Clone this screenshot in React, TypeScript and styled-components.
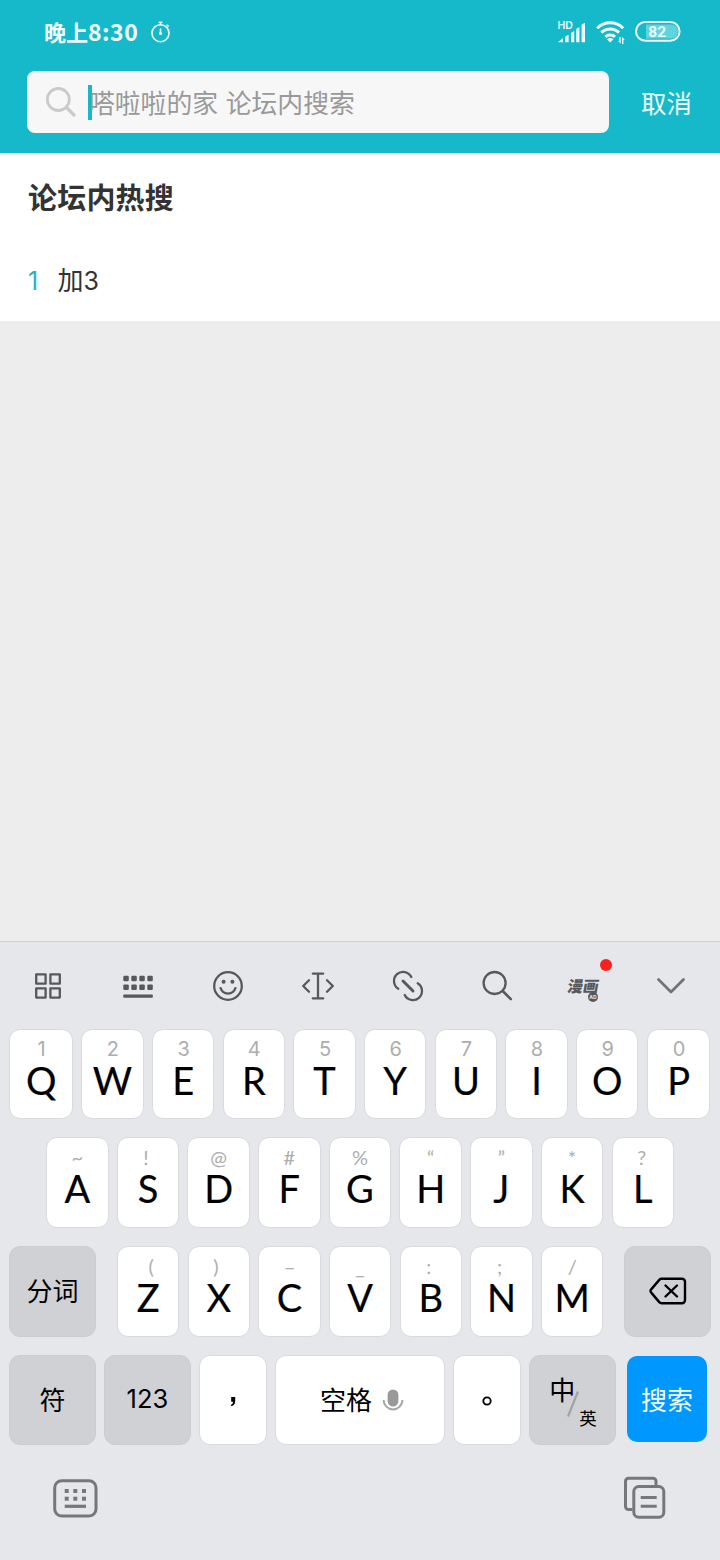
import React from "react";
import styled, { createGlobalStyle } from "styled-components";

const CJK = `"Noto Sans CJK SC", sans-serif`;

const GlobalStyle = createGlobalStyle`
  * { box-sizing: border-box; }
  body { margin: 0; background: #ededed; font-family: ${CJK}; }
  svg { display: block; flex: none; }
`;

const Screen = styled.div`
  width: 720px;
  height: 1560px;
  display: flex;
  flex-direction: column;
  background: #ededed;
  overflow: hidden;
`;

const Header = styled.header`
  height: 153.3px;
  background: #15b9c9;
  flex: none;
`;

const StatusBar = styled.div`
  height: 70.5px;
  padding: 0 39px 7px 44px;
  display: flex;
  align-items: center;
  color: #effdff;
`;

const Clock = styled.div`
  display: flex;
  align-items: baseline;
  font-size: 22px;
  font-weight: 700;
  line-height: 30px;
  margin: -2px 12px 0 0;
`;

const ClockDigits = styled.span`
  font-size: 23px;
  letter-spacing: 0.5px;
`;

const StatusIcons = styled.div`
  margin-left: auto;
  display: flex;
  align-items: center;
`;

const WifiIcon = styled.svg`
  margin: 0 9px 0 9px;
`;

const SearchRow = styled.div`
  display: flex;
  align-items: center;
  padding-left: 27px;
`;

const SearchField = styled.div`
  width: 582px;
  height: 62.8px;
  border-radius: 8px;
  background: #f7f7f7;
  display: flex;
  align-items: center;
  padding-left: 18px;
`;

const Caret = styled.div`
  width: 4px;
  height: 35px;
  margin: 1px -3px 0 11px;
  background: #15b9c9;
`;

const Placeholder = styled.div`
  font-size: 25.8px;
  line-height: 36px;
  padding-top: 1px;
  color: #999;
  word-spacing: 2px;
  white-space: nowrap;
`;

const Cancel = styled.div`
  margin-left: 32px;
  font-size: 25.5px;
  line-height: 36px;
  color: #effdff;
`;

const HotPanel = styled.section`
  height: 167.7px;
  background: #fff;
  padding: 21.7px 28px 0;
  flex: none;
`;

const HotTitle = styled.div`
  font-size: 29px;
  font-weight: 700;
  line-height: 42px;
  letter-spacing: 0.2px;
  color: #333;
`;

const HotItem = styled.div`
  display: flex;
  align-items: baseline;
  margin-top: 43px;
  line-height: 38px;
  font-size: 26px;
  color: #333;
`;

const Rank = styled.span`
  width: 29.5px;
  font-family: Inter, sans-serif;
  font-size: 25px;
  color: #27b4c2;
`;

const ItemNumber = styled.span`
  font-family: Inter, sans-serif;
  font-size: 25px;
`;

const Spacer = styled.div`
  flex: 1;
`;

const Keyboard = styled.section`
  height: 619.5px;
  flex: none;
  background: #e6e7eb;
  border-top: 1px solid #d0d1d3;
`;

const Toolbar = styled.div`
  height: 87.4px;
  display: flex;
  padding-left: 3px;
`;

const Tool = styled.div<{ $w?: number }>`
  width: ${(p) => p.$w ?? 90}px;
  height: 88.5px;
  display: flex;
  justify-content: center;
  align-items: center;
  position: relative;
`;

const Comic = styled.div`
  font-size: 15.5px;
  font-weight: 900;
  line-height: 20px;
  color: #56585b;
  transform: skewX(-10deg);
  margin: 0 2px 2px 0;
`;

const AdBadge = styled.span`
  position: absolute;
  left: 45px;
  top: 50px;
  width: 10px;
  height: 10px;
  border-radius: 50%;
  background: #56585b;
  color: #e6e7eb;
  font: 700 5px/10px Inter, sans-serif;
  text-align: center;
`;

const RedDot = styled.span`
  position: absolute;
  left: 57px;
  top: 17px;
  width: 12px;
  height: 12px;
  border-radius: 50%;
  background: #fb2020;
`;

const Row = styled.div<{ $left?: number }>`
  display: flex;
  height: 90.5px;
  margin-bottom: 18.1px;
  padding-left: ${(p) => p.$left ?? 9.2}px;
  gap: 8.2px;
`;

const KeyCap = styled.div<{ $w?: number; $tone?: "gray" | "white" }>`
  width: ${(p) => p.$w ?? 62.5}px;
  height: 90.5px;
  flex: none;
  border-radius: 11px;
  border: 1px solid ${(p) => (p.$tone === "gray" ? "#cbccd0" : "#d9dade")};
  background: ${(p) => (p.$tone === "gray" ? "#d0d1d5" : "#fff")};
  display: flex;
  align-items: center;
  justify-content: center;
  color: #000;
  font-size: 26px;
  line-height: 36px;
  padding-bottom: 2px;

  svg { margin-top: 2px; }
`;

const FunctionCap = styled(KeyCap).attrs({ $tone: "gray" as const })<{ $side?: "left" | "right" }>`
  width: 86.7px;
  margin-right: ${(p) => (p.$side === "left" ? 12.8 : 0)}px;
  margin-left: ${(p) => (p.$side === "right" ? 12.8 : 0)}px;
`;

const PunctuationCap = styled(KeyCap)<{ $drop: number }>`
  width: 67.6px;
  padding-top: ${(p) => p.$drop}px;
`;

const LetterCap = styled(KeyCap)`
  flex-direction: column;
  justify-content: flex-start;
  padding-top: 7.8px;
`;

const Hint = styled.div<{ $dx: number; $symbol: boolean }>`
  height: 22px;
  font: 400 20px/22px ${(p) => (p.$symbol ? "Lato" : "Inter")}, sans-serif;
  color: #adadad;
  margin-left: ${(p) => p.$dx * 2}px;
`;

const Letter = styled.div`
  margin-top: 1px;
  font: 400 38px/38px Lato, sans-serif;
  -webkit-text-stroke: 0.2px #000;
`;

const Numeric = styled.span`
  font-family: Inter, sans-serif;
  font-size: 25.5px;
`;

const SpaceLabel = styled.span`
  margin: 0 10px 0 4px;
`;

const SearchKey = styled.div`
  width: 80.5px;
  height: 86.5px;
  margin: 1px 0 0 2.6px;
  padding-bottom: 0.5px;
  border-radius: 10px;
  background: #0097ff;
  color: #effaff;
  font-size: 26px;
  display: flex;
  align-items: center;
  justify-content: center;
`;

const Chinese = styled.span`
  font-size: 26px;
  line-height: 36px;
  margin: -19px -9px 0 1px;
`;

const Slash = styled.span`
  padding-top: 9px;
`;

const English = styled.span`
  font-size: 17.5px;
  line-height: 24px;
  margin: 38px 0 0 -1px;
`;

const BottomBar = styled.div`
  display: flex;
  justify-content: space-between;
  padding: 12.4px 54px 0 53px;
`;

const ink = "#56585b";
const line = { fill: "none", strokeLinecap: "round", strokeLinejoin: "round" } as const;

type K = [letter: string, hint: string, dx?: number];
const ROW1: K[] = ["Q1", "W2", "E3", "R4", "T5", "Y6", "U7", "I8", "O9", "P0"].map((s) => [s[0], s[1], 0.5]);
const ROW2: K[] = [["A", "~"], ["S", "!", -2], ["D", "@"], ["F", "#"], ["G", "%"], ["H", "“"], ["J", "”"], ["K", "*"], ["L", "?", -1]];
const ROW3: K[] = [["Z", "(", 3], ["X", ")", -3], ["C", "–"], ["V", "_"], ["B", ":", -2], ["N", ";", -2], ["M", "/"]];

function LetterKey({ k, wide }: { k: K; wide?: boolean }) {
  return (
    <LetterCap $w={wide ? 63.8 : 62.5}>
      <Hint $dx={k[2] ?? 0} $symbol={!/\d/.test(k[1])}>{k[1]}</Hint>
      <Letter>{k[0]}</Letter>
    </LetterCap>
  );
}

function Glyph({ children }: { children: React.ReactNode }) {
  return (
    <svg width="40" height="40" viewBox="-20 -20 40 40" stroke={ink} strokeWidth="2.3" {...line}>
      {children}
    </svg>
  );
}

export default function App() {
  return (
    <Screen>
      <GlobalStyle />
      <Header>
        <StatusBar>
          <Clock>晚上<ClockDigits>8:30</ClockDigits></Clock>
          <svg width="20" height="22" viewBox="0 0 20 22" stroke="#effdff" strokeWidth="1.6" {...line}>
            <circle cx="10.5" cy="12.2" r="8.5" />
            <path d="M9.2 1.3h2.6M10.5 1.5v2M17.2 4.2l1 1M10.5 8v4" />
            <circle cx="10.5" cy="12.5" r="0.8" fill="#effdff" />
          </svg>
          <StatusIcons>
            <svg width="30" height="24" viewBox="0 0 30 24" fill="#effdff">
              <text x="0.5" y="9" fontFamily="Inter, sans-serif" fontWeight="600" fontSize="10.5">HD</text>
              <path d="M1 22.2 6 18v4.2zM8.2 16.5l3.4-1.8v7.5H8.2zM14 13l3.2-2v11.2H14zM19.2 9l3.2-2v15.2h-3.2zM24.6 4.6l3.4-1.8v19.4h-3.4z" />
            </svg>
            <WifiIcon width="30" height="24" viewBox="0 0 30 24">
              <g fill="none" stroke="#effdff" strokeWidth="3">
                <path d="M1.2 8.2a18.5 18.5 0 0 1 26 0" />
                <path d="M5.4 12.6a12.6 12.6 0 0 1 17.6 0" />
                <path d="M9.4 16.8a7 7 0 0 1 9.6 0" />
              </g>
              <path d="M11 19.2a4.6 4.6 0 0 1 6.4 0l-3.2 3.2zM24.7 17v6.5l-2.8-2.5H23.3V17zM26 24v-7l2.8 2.8H27.4V24z" fill="#effdff" />
            </WifiIcon>
            <svg width="46" height="21" viewBox="0 0 46 21">
              <path d="M11 3.5h25a7 7 0 0 1 0 14H11z" fill="#5fd3de" />
              <rect x="1" y="1" width="43.6" height="18.8" rx="9.4" fill="none" stroke="#effdff" strokeWidth="2" />
              <text x="22.2" y="16.3" textAnchor="middle" fontFamily="Roboto, sans-serif" fontWeight="700" fontSize="15.5" fill="#effdff">82</text>
            </svg>
          </StatusIcons>
        </StatusBar>
        <SearchRow>
          <SearchField>
            <svg width="32" height="32" viewBox="0 0 32 32" stroke="#cacaca" strokeWidth="2.8" {...line}>
              <circle cx="13.3" cy="13.5" r="11" />
              <path d="M21.5 21.5 29 29" strokeWidth="3.2" />
            </svg>
            <Caret />
            <Placeholder>嗒啦啦的家 论坛内搜索</Placeholder>
          </SearchField>
          <Cancel>取消</Cancel>
        </SearchRow>
      </Header>

      <HotPanel>
        <HotTitle>论坛内热搜</HotTitle>
        <HotItem>
          <Rank>1</Rank>加<ItemNumber>3</ItemNumber>
        </HotItem>
      </HotPanel>
      <Spacer />

      <Keyboard>
        <Toolbar>
          <Tool>
            <Glyph>
              <path d="M-11.8-11.6h9.4v9.3h-9.4zM2.4-11.6h9.4v9.3H2.4zM-11.8 2.3h9.4v9.3h-9.4zM2.4 2.3h9.4v9.3H2.4z" />
            </Glyph>
          </Tool>
          <Tool>
            <Glyph>
              <g fill={ink} stroke="none">
                {[-14.7, -6.7, 1.3, 9.3].map((x) => (
                  <React.Fragment key={x}>
                    <rect x={x} y="-10.3" width="5.5" height="5.5" rx="1.2" />
                    <rect x={x} y="-1.6" width="5.5" height="5.5" rx="1.2" />
                  </React.Fragment>
                ))}
                <rect x="-14.7" y="8.4" width="29.5" height="3.4" rx="0.8" />
              </g>
            </Glyph>
          </Tool>
          <Tool>
            <Glyph>
              <circle r="13.8" />
              <path d="M-7.4 2.2a7.8 7.8 0 0 0 14.8 0" />
              <circle cx="-4.4" cy="-4.2" r="2" fill={ink} stroke="none" />
              <circle cx="4.4" cy="-4.2" r="2" fill={ink} stroke="none" />
            </Glyph>
          </Tool>
          <Tool>
            <Glyph>
              <path d="M-5.2-12.4H5.2M-5.2 12.4H5.2M0-12.4v24.8M-9-5.8-14.8 0l5.8 5.8M9-5.8 14.8 0 9 5.8" />
            </Glyph>
          </Tool>
          <Tool>
            <Glyph>
              <path d="M3.3-9A9.1 9.1 0 1 0-9.7 2.7M-3.3 9A9.1 9.1 0 1 0 9.7-2.7" />
              <path d="M-5-5 5 5" strokeWidth="2.9" />
            </Glyph>
          </Tool>
          <Tool>
            <Glyph>
              <circle cx="-3.4" cy="-3" r="11" />
              <path d="M5.2 5.5l7.6 7.6" strokeWidth="2.6" />
            </Glyph>
          </Tool>
          <Tool $w={84}>
            <Comic>漫画</Comic>
            <AdBadge>AD</AdBadge>
            <RedDot />
          </Tool>
          <Tool $w={87}>
            <Glyph>
              <path d="M-12.5-6.5 0 6l12.5-12.5" stroke="#717376" strokeWidth="2.8" />
            </Glyph>
          </Tool>
        </Toolbar>

        <Row>
          {ROW1.map((k, i) => <LetterKey key={k[0]} k={k} wide={i === 0 || i === 9} />)}
        </Row>
        <Row $left={46}>
          {ROW2.map((k) => <LetterKey key={k[0]} k={k} />)}
        </Row>
        <Row>
          <FunctionCap $side="left">分词</FunctionCap>
          {ROW3.map((k) => <LetterKey key={k[0]} k={k} />)}
          <FunctionCap $side="right">
            <svg width="38" height="28" viewBox="0 0 38 28" stroke="#000" strokeWidth="2.4" {...line}>
              <path d="M12.5 1.8H33a3 3 0 0 1 3 3v18.4a3 3 0 0 1-3 3H12.5a3 3 0 0 1-2-.8L2.2 15.6a2.2 2.2 0 0 1 0-3.2l8.3-9.8a3 3 0 0 1 2-.8z" />
              <path d="M16.5 8.5 28 19.5M28 8.5 16.5 19.5" />
            </svg>
          </FunctionCap>
        </Row>
        <Row>
          <FunctionCap>符</FunctionCap>
          <FunctionCap><Numeric>123</Numeric></FunctionCap>
          <PunctuationCap $drop={5}>
            <svg width="8" height="12" viewBox="0 0 8 12"><path d="M2.2 1h4v4.2c0 2.5-1.4 4.5-3.8 5l-.5-1.3C3.4 8.3 4 7.3 4 5.8H2.2z" fill="#000" /></svg>
          </PunctuationCap>
          <KeyCap $w={170.5}>
            <SpaceLabel>空格</SpaceLabel>
            <svg width="22" height="24" viewBox="0 0 22 24">
              <rect x="5.6" y="1.5" width="10.8" height="17" rx="5.4" fill="#999" />
              <path d="M1.6 12a9.4 9.4 0 0 0 18.8 0" fill="none" stroke="#a5a5a5" strokeWidth="2" />
            </svg>
          </KeyCap>
          <PunctuationCap $drop={1.5}>
            <svg width="10" height="10" viewBox="0 0 10 10"><circle cx="5" cy="5" r="3.7" fill="none" stroke="#000" strokeWidth="1.8" /></svg>
          </PunctuationCap>
          <FunctionCap>
            <Chinese>中</Chinese>
            <Slash>
              <svg width="14" height="28" viewBox="0 0 14 28"><path d="M12 1.5 2 26.5" stroke="#a2a3a6" strokeWidth="2.2" /></svg>
            </Slash>
            <English>英</English>
          </FunctionCap>
          <SearchKey>搜索</SearchKey>
        </Row>

        <BottomBar>
          <svg width="45" height="44" viewBox="53 1476 45 44">
            <rect x="54.7" y="1480.7" width="41.3" height="35.3" rx="7" fill="none" stroke="#76777a" strokeWidth="3" />
            <g fill="#76777a">
              {[64.7, 73.3, 82].map((x) => (
                <React.Fragment key={x}>
                  <rect x={x} y="1489" width="4" height="4" />
                  <rect x={x} y="1496.7" width="4" height="4" />
                </React.Fragment>
              ))}
              <rect x="64.7" y="1504.7" width="21.3" height="3.2" />
            </g>
          </svg>
          <svg width="43" height="44" viewBox="623 1476 43 44" fill="none" stroke="#76777a" strokeWidth="3">
            <path d="M632.5 1509.5h-4a3 3 0 0 1-3-3v-25.3a3 3 0 0 1 3-3H653a3 3 0 0 1 3 3v4" />
            <rect x="633.8" y="1486.5" width="30" height="30.7" rx="5" />
            <path d="M640.7 1497.5h16M640.7 1506.3h16" />
          </svg>
        </BottomBar>
      </Keyboard>
    </Screen>
  );
}
